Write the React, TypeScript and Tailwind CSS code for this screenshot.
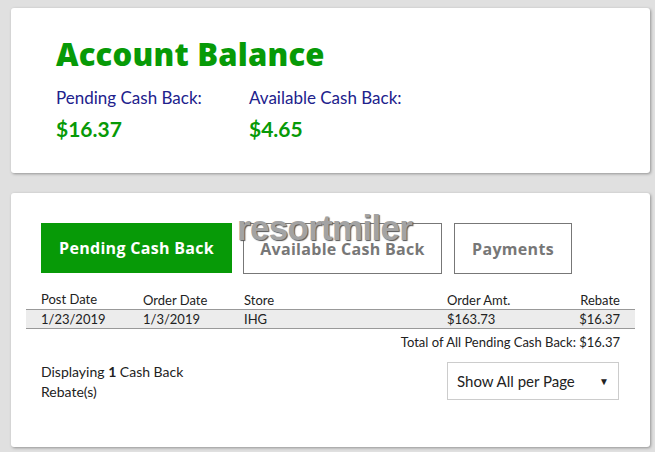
export default function App() {
  const rows = [
    { post: "1/23/2019", order: "1/3/2019", store: "IHG", amt: "$163.73", rebate: "$16.37" },
  ];

  return (
    <div className="w-[655px] h-[452px] bg-[#e0e0e0] pt-[8px] pl-[11px] pr-[5px] font-['Lato',sans-serif] overflow-hidden">
      {/* Balance card */}
      <div className="bg-white rounded-[3px] shadow-[1px_1px_3px_rgba(0,0,0,0.35)] h-[165px] pl-[45px] pt-[26px]">
        <h1 className="text-[31px] leading-[40px] font-black text-[#079a07] font-['Open_Sans',sans-serif] tracking-[0.2px]">
          Account Balance
        </h1>
        <div className="flex mt-[13px]">
          <div className="w-[193px]">
            <p className="text-[17px] leading-[22px] text-[#21218c]">Pending Cash Back:</p>
            <p className="text-[21px] leading-[26px] font-bold text-[#079a07] mt-[7px]">$16.37</p>
          </div>
          <div>
            <p className="text-[17px] leading-[22px] text-[#21218c]">Available Cash Back:</p>
            <p className="text-[21px] leading-[26px] font-bold text-[#079a07] mt-[7px]">$4.65</p>
          </div>
        </div>
      </div>

      {/* Cash back card */}
      <div className="bg-white rounded-[3px] shadow-[1px_1px_3px_rgba(0,0,0,0.35)] h-[254px] mt-[20px] px-[30px] pt-[30px] relative">
        <div className="flex items-start gap-[11px]">
          <button className="w-[191px] h-[50px] bg-[#079a07] text-white text-[16px] font-bold font-['Open_Sans',sans-serif] tracking-[0.3px]">
            Pending Cash Back
          </button>
          <button className="w-[199px] h-[51px] border border-[#777] text-[#777] text-[16px] font-bold font-['Open_Sans',sans-serif] tracking-[0.3px]">
            Available Cash Back
          </button>
          <button className="w-[118px] h-[51px] ml-[1px] border border-[#777] text-[#777] text-[16px] font-bold font-['Open_Sans',sans-serif] tracking-[0.3px]">
            Payments
          </button>
        </div>
        <span className="absolute left-[226px] top-[17px] text-[35px] leading-[35px] font-bold text-[#a3a3a3] tracking-[-0.7px] font-['Liberation_Sans',sans-serif] [text-shadow:1px_1px_1px_#555]">
          resortmiler
        </span>

        <table className="table-fixed w-[609px] -mx-[15px] mt-[16px] text-[13px] leading-[18px] text-[#222] border-collapse">
          <colgroup>
            <col className="w-[102px]" />
            <col className="w-[101px]" />
            <col className="w-[203px]" />
            <col className="w-[110px]" />
            <col />
          </colgroup>
          <thead>
            <tr className="border-b border-[#999]">
              <th className="text-left font-normal pl-[15px] pb-[1px]">Post Date</th>
              <th className="text-left font-normal pl-[15px]">Order Date</th>
              <th className="text-left font-normal pl-[15px]">Store</th>
              <th className="text-left font-normal pl-[15px]">Order Amt.</th>
              <th className="text-right font-normal pr-[15px]">Rebate</th>
            </tr>
          </thead>
          <tbody>
            {rows.map((r) => (
              <tr key={r.post} className="bg-[#ececec] border-b border-[#999]">
                <td className="pl-[15px]">{r.post}</td>
                <td className="pl-[15px]">{r.order}</td>
                <td className="pl-[15px]">{r.store}</td>
                <td className="pl-[15px]">{r.amt}</td>
                <td className="text-right pr-[15px]">{r.rebate}</td>
              </tr>
            ))}
            <tr>
              <td colSpan={5} className="text-right pr-[15px] pt-[4px]">
                Total of All Pending Cash Back: $16.37
              </td>
            </tr>
          </tbody>
        </table>

        <div className="flex justify-between items-start mt-[11px] pr-[1px]">
          <p className="text-[14px] leading-[20px] text-[#222] w-[170px]">
            Displaying <b>1</b> Cash Back Rebate(s)
          </p>
          <div className="w-[172px] h-[38px] border border-[#ccc] flex items-center justify-between pl-[9px] pr-[9px] text-[15px] text-[#222]">
            <span>Show All per Page</span>
            <span className="text-[10px]">▼</span>
          </div>
        </div>
      </div>
    </div>
  );
}
